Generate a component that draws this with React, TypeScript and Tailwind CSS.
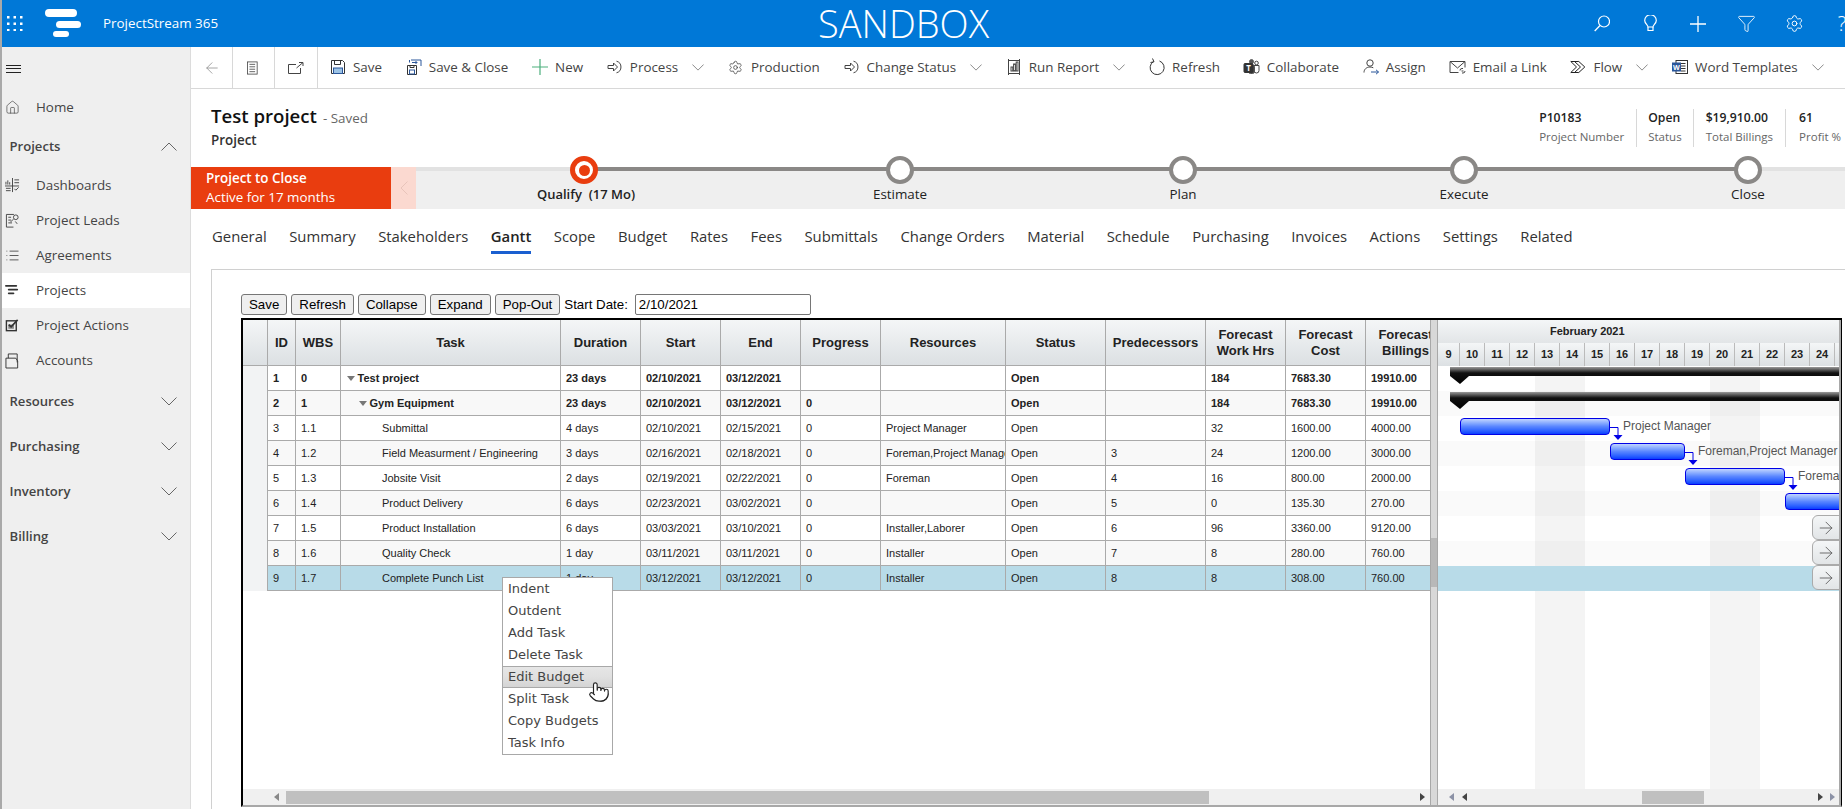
import React from 'react';
import { ArrowLeft, Filter, House, List, Pointer, Settings } from 'lucide-react';

const Svg = ({ w = 16, h = 16, vb = '0 0 16 16', children, className = '' }: { w?: number; h?: number; vb?: string; children: React.ReactNode; className?: string }) => (
  <svg width={w} height={h} viewBox={vb} fill="none" stroke="currentColor" strokeWidth={1} className={`shrink-0 ${className}`}>
    {children}
  </svg>
);

const ChevDown = ({ w = 12, h = 7, up = false }: { w?: number; h?: number; up?: boolean }) => (
  <Svg w={w} h={h} vb="0 0 16 9" className="text-[#666]">
    <path d={up ? 'M0.5 8.5 8 1l7.5 7.5' : 'M0.5 0.5 8 8l7.5-7.5'} />
  </Svg>
);

const ProcessIcon = () => (
  <Svg>
    <path d="M1 6.5h5.5V4l4 4-4 4V9.5H1z" />
    <path d="M9.5 2.2a6 6 0 0 1 0 11.6" />
  </Svg>
);

const icons: Record<string, React.ReactNode> = {
  save: (
    <Svg>
      <path d="M1.5 1.5h11l2 2v11h-13z" stroke="#333" />
      <path d="M4.5 1.5v4h6v-4" stroke="#333" />
      <rect x="3.5" y="9" width="9" height="5.5" fill="#9cc3e5" stroke="#2b579a" />
    </Svg>
  ),
  saveClose: (
    <Svg>
      <path d="M1.5 6.5h9v9h-9z" stroke="#333" />
      <rect x="3.5" y="11" width="5" height="4" stroke="#2b579a" />
      <path d="M4 6.5v2h4v-2" stroke="#333" />
      <path d="M5 1h10v6M3.5 1v2.5M6 3.5h5M9.5 2l1.5 1.5L9.5 5" stroke="#2b579a" />
    </Svg>
  ),
  new: (
    <Svg>
      <path d="M8 0v16M0 8h16" stroke="#4caf7d" strokeWidth={1.2} />
    </Svg>
  ),
  process: <ProcessIcon />,
  production: <Settings size={15} strokeWidth={1.25} />,
  status: <ProcessIcon />,
  report: (
    <Svg>
      <path d="M2 1.5h12M2 14.5h12M2.5 0v16M13.5 0v16" />
      <rect x="5" y="8" width="1.8" height="4" />
      <rect x="7.6" y="5" width="1.8" height="7" />
      <rect x="10.2" y="3" width="1.8" height="9" />
    </Svg>
  ),
  refresh: (
    <Svg h={18} vb="0 0 16 18" className="text-[#333]">
      <path d="M10.500 3a7 7 0 1 1-6 .6" />
      <path d="M3.500 0.500 5 3.800 1.500 4.500" />
    </Svg>
  ),
  collaborate: (
    <Svg w={17}>
      <circle cx="13" cy="4" r="1.8" />
      <circle cx="8" cy="2.6" r="2" fill="#555" stroke="#555" />
      <path d="M10 6.5h5.5v5a2.5 2.5 0 0 1-5 0" />
      <rect x="5" y="6" width="6" height="8.5" rx="2" fill="#555" stroke="#555" />
      <rect x="0.5" y="4.5" width="9" height="9" rx="1" fill="#333" stroke="#333" />
      <text x="5" y="12" fontSize="8" fontWeight="700" fill="#fff" stroke="none" textAnchor="middle">T</text>
    </Svg>
  ),
  assign: (
    <Svg>
      <circle cx="7" cy="4" r="3.2" stroke="#444" />
      <path d="M1 13.5c0-3.2 2.5-5.5 6-5.5 1.3 0 2.4.3 3.3.8" stroke="#444" />
      <path d="M8 13h7.5M13 10.8l2.5 2.2-2.5 2.2" stroke="#2b579a" />
    </Svg>
  ),
  email: (
    <Svg w={17}>
      <path d="M9 13.5H.5v-11h15v6" stroke="#444" />
      <path d="M.5 2.5 8 9l7.5-6.5" stroke="#444" />
      <path d="M10.5 11.5a2 2 0 0 1 2-2h1M15.5 12a2 2 0 0 1-2 2h-1M12 12h2" stroke="#444" />
    </Svg>
  ),
  flow: (
    <Svg>
      <path d="M.8 2.5h8l6 5.5-6 5.5h-8L6.5 8z" stroke="#222" />
      <path d="M4.5 2.5 10.5 8l-6 5.5" stroke="#222" />
    </Svg>
  ),
  word: (
    <Svg>
      <rect x="4" y="1.5" width="11.5" height="13" stroke="#333" />
      <path d="M9 4.5h4.5M9 7h4.5M9 9.5h4.5M9 12h4.5" stroke="#333" />
      <rect x="0.5" y="4" width="8" height="8" fill="#2b579a" stroke="#2b579a" />
      <text x="4.5" y="10.8" fontSize="7" fontWeight="700" fill="#fff" stroke="none" textAnchor="middle">W</text>
    </Svg>
  ),
};

const commands: { key: string; label: string; chev?: boolean }[] = [
  { key: 'save', label: 'Save' },
  { key: 'saveClose', label: 'Save & Close' },
  { key: 'new', label: 'New' },
  { key: 'process', label: 'Process', chev: true },
  { key: 'production', label: 'Production' },
  { key: 'status', label: 'Change Status', chev: true },
  { key: 'report', label: 'Run Report', chev: true },
  { key: 'refresh', label: 'Refresh' },
  { key: 'collaborate', label: 'Collaborate' },
  { key: 'assign', label: 'Assign' },
  { key: 'email', label: 'Email a Link' },
  { key: 'flow', label: 'Flow', chev: true },
  { key: 'word', label: 'Word Templates', chev: true },
];

const navIcons: Record<string, React.ReactNode> = {
  Home: <House size={15} strokeWidth={1.1} />,
  Dashboards: (
    <Svg w={15} h={15} className="text-[#444]">
      <path d="M1 4v3M3 2.5V7M5 4.500V7M8 0v15M0 8.500h15M10 2h5M10 5h5M1 11h5M1 13.500h5M10 11.500l1.500 1.500 3-3" />
    </Svg>
  ),
  'Project Leads': (
    <Svg w={15} h={16} className="text-[#444]">
      <path d="M9 14.500H1.500V1h8M3.500 4h3M3.500 7h3M3.500 10h4" />
      <circle cx="11.500" cy="4" r="2.500" />
      <path d="M6 9l3-3M11 8.500 13 11" />
    </Svg>
  ),
  Agreements: <List size={15} strokeWidth={1.25} className="text-[#333]" />,
  Projects: (
    <Svg w={15} h={15}>
      <path d="M1 3h11M4 7h9M4 11h5" stroke="#333" strokeWidth={2} strokeLinecap="round" />
    </Svg>
  ),
  'Project Actions': (
    <Svg w={15} h={15} className="text-[#333]">
      <rect x="1.500" y="3" width="10.500" height="10.500" strokeWidth={1.5} />
      <rect x="3.500" y="7" width="6" height="4.500" fill="#888" stroke="none" />
      <path d="M4 7l2.500 2.500L13.500 2" strokeWidth={1.8} />
    </Svg>
  ),
  Accounts: (
    <Svg w={15} h={17} className="text-[#333]">
      <path d="M1 5.500h10.500l2 3v7.500H1zM3.500 5.500v-4.500h9.500v9" />
    </Svg>
  ),
};

const tabs = ['General', 'Summary', 'Stakeholders', 'Gantt', 'Scope', 'Budget', 'Rates', 'Fees', 'Submittals', 'Change Orders', 'Material', 'Schedule', 'Purchasing', 'Invoices', 'Actions', 'Settings', 'Related'];

const stages = [
  { label: 'Qualify  (17 Mo)', width: 'w-[336px]', active: true },
  { label: 'Estimate', width: 'w-[296px]' },
  { label: 'Plan', width: 'w-[270px]' },
  { label: 'Execute', width: 'w-[292px]' },
  { label: 'Close', width: 'w-[276px]' },
];

const stats = [
  { value: 'P10183', label: 'Project Number', cls: 'pr-[12px]' },
  { value: 'Open', label: 'Status', cls: 'border-l px-[11px]' },
  { value: '$19,910.00', label: 'Total Billings', cls: 'border-l px-[12px]' },
  { value: '61', label: 'Profit %', cls: 'border-l pl-[13px]' },
];

const columns = [
  { title: 'ID', cls: 'w-[28px]' },
  { title: 'WBS', cls: 'w-[45px]' },
  { title: 'Task', cls: 'w-[220px]' },
  { title: 'Duration', cls: 'w-[80px]' },
  { title: 'Start', cls: 'w-[80px]' },
  { title: 'End', cls: 'w-[80px]' },
  { title: 'Progress', cls: 'w-[80px]' },
  { title: 'Resources', cls: 'w-[125px]' },
  { title: 'Status', cls: 'w-[100px]' },
  { title: 'Predecessors', cls: 'w-[100px]' },
  { title: 'Forecast Work Hrs', cls: 'w-[80px]' },
  { title: 'Forecast Cost', cls: 'w-[80px]' },
  { title: 'Forecast Billings', cls: 'w-[80px]' },
];

const rows = [
  { level: 0, bold: true, cells: ['1', '0', 'Test project', '23 days', '02/10/2021', '03/12/2021', '', '', 'Open', '', '184', '7683.30', '19910.00'] },
  { level: 1, bold: true, cells: ['2', '1', 'Gym Equipment', '23 days', '02/10/2021', '03/12/2021', '0', '', 'Open', '', '184', '7683.30', '19910.00'] },
  { level: 2, cells: ['3', '1.1', 'Submittal', '4 days', '02/10/2021', '02/15/2021', '0', 'Project Manager', 'Open', '', '32', '1600.00', '4000.00'] },
  { level: 2, cells: ['4', '1.2', 'Field Measurment / Engineering', '3 days', '02/16/2021', '02/18/2021', '0', 'Foreman,Project Manager', 'Open', '3', '24', '1200.00', '3000.00'] },
  { level: 2, cells: ['5', '1.3', 'Jobsite Visit', '2 days', '02/19/2021', '02/22/2021', '0', 'Foreman', 'Open', '4', '16', '800.00', '2000.00'] },
  { level: 2, cells: ['6', '1.4', 'Product Delivery', '6 days', '02/23/2021', '03/02/2021', '0', '', 'Open', '5', '0', '135.30', '270.00'] },
  { level: 2, cells: ['7', '1.5', 'Product Installation', '6 days', '03/03/2021', '03/10/2021', '0', 'Installer,Laborer', 'Open', '6', '96', '3360.00', '9120.00'] },
  { level: 2, cells: ['8', '1.6', 'Quality Check', '1 day', '03/11/2021', '03/11/2021', '0', 'Installer', 'Open', '7', '8', '280.00', '760.00'] },
  { level: 2, selected: true, cells: ['9', '1.7', 'Complete Punch List', '1 day', '03/12/2021', '03/12/2021', '0', 'Installer', 'Open', '8', '8', '308.00', '760.00'] },
];

const days = [9, 10, 11, 12, 13, 14, 15, 16, 17, 18, 19, 20, 21, 22, 23, 24, 25];

const menuItems = ['Indent', 'Outdent', 'Add Task', 'Delete Task', 'Edit Budget', 'Split Task', 'Copy Budgets', 'Task Info'];

const bars = [
  { row: 2, cls: 'left-[22px] w-[150px]', label: 'Project Manager', labelCls: 'left-[185px]' },
  { row: 3, cls: 'left-[172px] w-[75px]', label: 'Foreman,Project Manager', labelCls: 'left-[260px]' },
  { row: 4, cls: 'left-[247px] w-[100px]', label: 'Foreman', labelCls: 'left-[360px]' },
  { row: 5, cls: 'left-[347px] w-[70px]', label: '', labelCls: '' },
];

const Triangle = ({ dir, color }: { dir: 'l' | 'r'; color: string }) => (
  <svg width="5" height="8" viewBox="0 0 5 8" fill={color} className="shrink-0">
    <path d={dir === 'l' ? 'M5 0v8L0 4z' : 'M0 0v8l5-4z'} />
  </svg>
);

const SummaryBar = ({ id }: { id: string }) => (
  <svg width="401" height="21" className="absolute left-0 top-0">
    <defs>
      <linearGradient id={id} x1="0" y1="0" x2="0" y2="1">
        <stop offset="0" stopColor="#9a9a9a" />
        <stop offset="0.35" stopColor="#111" />
        <stop offset="1" stopColor="#000" />
      </linearGradient>
    </defs>
    <path d="M12 2H401V11H31L22 19L12 11Z" fill={`url(#${id})`} />
  </svg>
);

export default function App() {
  return (
    <div className="flex h-[809px] w-[1845px] overflow-hidden bg-white font-['Open_Sans',sans-serif] text-[13.4px] text-[#333]">
      <div className="w-[2px] shrink-0 bg-[#a9a9a9]" />
      <div className="flex min-w-0 flex-1 flex-col">
        {/* top bar */}
        <header className="flex h-[47px] shrink-0 items-center bg-[#0078d7] pl-[5px] text-white">
          <svg width="16" height="15" viewBox="0 0 16 15" fill="#fff" className="shrink-0">
            {[0, 6.5, 13].map((y) => [0, 6.5, 13].map((x) => <rect key={`${x}-${y}`} x={x} y={y} width="2.500" height="2.500" />))}
          </svg>
          <svg width="36" height="29" viewBox="0 0 36 29" fill="#fff" className="ml-[22px] shrink-0">
            <rect x="0" y="0" width="32" height="8" rx="4" />
            <rect x="11" y="12" width="25" height="7" rx="3.500" />
            <rect x="8" y="22" width="16" height="6" rx="3" />
          </svg>
          <div className="ml-[6px] h-[20px] w-px bg-white/40" />
          <span className="ml-[16px] w-[113px] whitespace-nowrap">ProjectStream 365</span>
          <span className="ml-[602px] whitespace-nowrap text-[38px] leading-[47px] font-light">SANDBOX</span>
          <div className="ml-[589px] flex shrink-0 items-center">
            <div className="flex w-[48px] justify-center">
              <Svg h={17} vb="0 0 16 17">
                <circle cx="10" cy="6.500" r="5.500" strokeWidth={1.2} />
                <path d="M6 10.500 .7 16" strokeWidth={1.3} />
              </Svg>
            </div>
            <div className="flex w-[48px] justify-center">
              <Svg w={13} h={17} vb="0 0 13 17">
                <path d="M4 12c0-2-3.300-3.500-3.300-6.500a5.800 5.800 0 0 1 11.600 0C12.300 8.500 9 10 9 12z" strokeWidth={1.2} />
                <path d="M4 12v3.500h5V12" strokeWidth={1.2} />
              </Svg>
            </div>
            <div className="flex w-[48px] justify-center">
              <Svg>
                <path d="M8 0v16M0 8h16" strokeWidth={1.3} />
              </Svg>
            </div>
            <div className="flex w-[48px] justify-center"><Filter size={19} strokeWidth={1.1} /></div>
            <div className="flex w-[48px] justify-center"><Settings size={19} strokeWidth={1.2} /></div>
            <div className="flex w-[48px] justify-center text-[20px] font-light">?</div>
          </div>
        </header>

        <div className="flex min-h-0 flex-1">
          {/* sidebar */}
          <aside className="flex w-[189px] shrink-0 flex-col border-r border-[#dcdcdc] bg-[#efefef]">
            <div className="flex h-[43px] shrink-0 items-center pl-[4px]">
              <div className="flex w-[15px] flex-col gap-[2.5px]">
                <div className="h-px bg-[#222]" />
                <div className="h-px bg-[#222]" />
                <div className="h-px bg-[#222]" />
              </div>
            </div>
            <NavItem label="Home" />
            <NavGroup label="Projects" open className="h-[43px]" />
            <NavItem label="Dashboards" />
            <NavItem label="Project Leads" />
            <NavItem label="Agreements" />
            <NavItem label="Projects" selected />
            <NavItem label="Project Actions" />
            <NavItem label="Accounts" />
            <div className="h-[1px] shrink-0" />
            <NavGroup label="Resources" className="h-[45px]" />
            <NavGroup label="Purchasing" className="h-[45px]" />
            <NavGroup label="Inventory" className="h-[45px]" />
            <NavGroup label="Billing" className="h-[45px]" />
          </aside>

          {/* content */}
          <main className="flex min-w-0 flex-1 flex-col">
            <div className="flex h-[42px] shrink-0 items-center border-b border-[#d8d8d8] text-[#444]">
              <div className="flex h-full w-[42px] items-center justify-center border-r border-[#d8d8d8] text-[#888]">
                <ArrowLeft size={18} strokeWidth={1} />
              </div>
              <div className="flex h-full w-[42px] items-center justify-center border-r border-[#d8d8d8]">
                <Svg w={13} h={16}>
                  <rect x="0.5" y="0.5" width="12" height="15" />
                  <path d="M3 3.500h7M3 6.500h7M3 9.500h7M3 12.500h7" />
                </Svg>
              </div>
              <div className="flex h-full w-[43px] items-center justify-center border-r border-[#d8d8d8]">
                <Svg h={12} vb="0 0 16 12">
                  <path d="M12.500 6v5.500H.5v-9H8" />
                  <path d="M8.500 6 15 .5M11 .5h4V4" />
                </Svg>
              </div>
              <div className="ml-[12px] flex items-center gap-[23.8px]">
                {commands.map((c) => (
                  <div key={c.key} className="flex shrink-0 items-center whitespace-nowrap">
                    <span className="flex w-[16px] justify-center">{icons[c.key]}</span>
                    <span className="ml-[7px]">{c.label}</span>
                    {c.chev && (
                      <span className="ml-[14px]">
                        <ChevDown />
                      </span>
                    )}
                  </div>
                ))}
              </div>
            </div>

            {/* record header */}
            <div className="flex h-[78px] shrink-0 justify-between pl-[20px] pr-[4px] pt-[14px]">
              <div>
                <div className="flex items-baseline whitespace-nowrap">
                  <span className="text-[18.6px] leading-[26px] font-semibold text-[#111]">Test project</span>
                  <span className="ml-[6px] text-[#666]">- Saved</span>
                </div>
                <div className="mt-[1px] leading-[20px] font-semibold text-[#333]">Project</div>
              </div>
              <div className="mt-[6px] flex h-[38px]">
                {stats.map((s) => (
                  <div key={s.label} className={`whitespace-nowrap border-[#d8d8d8] ${s.cls}`}>
                    <div className="text-[12.2px] leading-[18px] font-semibold text-[#222]">{s.value}</div>
                    <div className="text-[11.5px] leading-[20px] text-[#666]">{s.label}</div>
                  </div>
                ))}
              </div>
            </div>

            {/* process bar */}
            <div className="flex h-[42px] shrink-0">
              <div className="flex w-[200px] shrink-0 flex-col justify-center bg-[#e93d0f] pl-[15px] leading-[19px] text-white">
                <span className="font-semibold">Project to Close</span>
                <span>Active for 17 months</span>
              </div>
              <div className="flex w-[25px] shrink-0 items-center justify-center bg-[#fbd9d0] text-[#e8c4ba]">
                <svg width="8" height="14" viewBox="0 0 8 14" fill="none" stroke="currentColor"><path d="M7.500.5 1 7l6.500 6.500" /></svg>
              </div>
              <div className="relative flex flex-1 bg-[#efefef]">
                <div className="absolute inset-x-0 top-0 h-[4px] bg-[#e2e2e2]" />
                <div className="absolute left-[168px] top-0 h-[4px] w-[1164px] bg-[#8a8886]" />
                {stages.map((s) => (
                  <div key={s.label} className={`relative -mt-[11px] flex shrink-0 flex-col items-center ${s.width}`}>
                    {s.active ? (
                      <div className="flex h-[28px] w-[28px] items-center justify-center rounded-full border-[5px] border-[#e93d0f] bg-white">
                        <div className="h-[11px] w-[11px] rounded-full bg-[#e93d0f]" />
                      </div>
                    ) : (
                      <div className="h-[28px] w-[28px] rounded-full border-[4px] border-[#8a8886] bg-white" />
                    )}
                    <span className={`whitespace-pre leading-[20px] text-[#222] ${s.active ? 'ml-[4px] text-[13px] font-semibold' : ''}`}>{s.label}</span>
                  </div>
                ))}
              </div>
            </div>

            {/* tabs */}
            <div className="flex h-[60px] shrink-0 gap-[22.500px] pl-[21px] pt-[17px] text-[14.85px] text-[#333]">
              {tabs.map((t) => (
                <div key={t} className={`h-[28px] whitespace-nowrap border-b-[3px] leading-[20px] ${t === 'Gantt' ? 'border-[#1a5fd0] font-semibold text-[#222]' : 'border-transparent'}`}>
                  {t}
                </div>
              ))}
            </div>

            {/* gantt panel */}
            <div className="ml-[20px] flex-1 border-l border-t border-[#d0d0d0] pl-[29px] pt-[24px] font-['Liberation_Sans',Arial,sans-serif] text-black">
              <div className="flex h-[21px] items-center gap-[4px] text-[13.300px]">
                {['Save', 'Refresh', 'Collapse', 'Expand', 'Pop-Out'].map((b) => (
                  <button key={b} className="h-[21px] rounded-[3px] border border-[#767676] bg-[#efefef] px-[7px] leading-none">
                    {b}
                  </button>
                ))}
                <span className="mr-[3px]">Start Date:</span>
                <input readOnly value="2/10/2021" className="h-[21px] w-[176px] rounded-[2px] border border-[#767676] px-[3px] outline-none" />
              </div>

              <div className="relative mt-[3px] flex h-[489px] w-[1601px] border-x border-t-2 border-b-2 border-black border-b-[#a8a8a8] border-l-2">
                {/* table side */}
                <div className="flex w-[1187px] shrink-0 flex-col overflow-hidden bg-white">
                  <div className="flex h-[46px] shrink-0 border-b border-[#aaa] bg-gradient-to-b from-[#f4f6f7] to-[#dce0e3] text-[13px] leading-[16px] font-bold text-[#222]">
                    <div className="w-[25px] shrink-0 border-r border-[#aaa]" />
                    {columns.map((c) => (
                      <div key={c.title} className={`flex shrink-0 items-center justify-center border-r border-[#aaa] text-center ${c.cls}`}>
                        {c.title}
                      </div>
                    ))}
                  </div>
                  {rows.map((r, i) => (
                    <div key={r.cells[0]} className={`flex h-[25px] shrink-0 text-[11px] text-[#222] ${r.selected ? 'bg-[#b8dbe8]' : i % 2 ? 'bg-[#f8f8f8]' : 'bg-white'} ${r.bold ? 'font-bold' : ''}`}>
                      <div className="w-[25px] shrink-0 border-r border-[#aaa] bg-[#f2f3f4]" />
                      {r.cells.map((cell, j) => (
                        <div key={j} className={`flex shrink-0 items-center overflow-hidden whitespace-nowrap border-b border-r border-[#aaa] px-[5px] ${columns[j].cls}`}>
                          {j === 2 ? (
                            <span className={`flex items-center ${r.level === 0 ? 'pl-px' : r.level === 1 ? 'pl-[13px]' : 'pl-[36px]'}`}>
                              {r.level < 2 && <span className="mr-[2.500px] h-0 w-0 border-x-[4.500px] border-t-[5px] border-x-transparent border-t-[#777]" />}
                              {cell}
                            </span>
                          ) : (
                            cell
                          )}
                        </div>
                      ))}
                    </div>
                  ))}
                  <div className="flex-1" />
                  <div className="flex h-[16px] shrink-0 items-center bg-[#f0f0f0]">
                    <div className="w-[35px] shrink-0 pl-[31px]"><Triangle dir="l" color="#888" /></div>
                    <div className="ml-[8px] h-[13px] w-[923px] bg-[#c0c0c0]" />
                    <div className="ml-[211px]"><Triangle dir="r" color="#444" /></div>
                  </div>
                </div>

                {/* splitter */}
                <div className="flex w-[8px] shrink-0 flex-col border-x border-[#a8a8a8] bg-[#d8d8d8]">
                  <div className="mt-[218px] h-[49px] bg-[#b8b8b8]" />
                </div>

                {/* chart side */}
                <div className="flex w-[401px] shrink-0 flex-col overflow-hidden bg-white">
                  <div className="flex h-[23px] shrink-0 items-center bg-gradient-to-b from-[#f4f6f7] to-[#e2e5e7] pl-[112px] text-[11px] font-bold text-[#222]">
                    February 2021
                  </div>
                  <div className="flex h-[23px] shrink-0 bg-gradient-to-b from-[#f4f6f7] to-[#dce0e3] text-[11px] font-bold text-[#222]">
                    {days.map((d) => (
                      <div key={d} className={`flex shrink-0 items-center justify-center border-r border-[#bbb] ${d === 9 ? 'w-[22px]' : 'w-[25px]'}`}>
                        {d}
                      </div>
                    ))}
                  </div>
                  <div className="relative flex-1">
                    <div className="absolute inset-y-0 left-[97px] w-[50px] bg-[#f4f4f4]" />
                    <div className="absolute inset-y-0 left-[272px] w-[50px] bg-[#f4f4f4]" />
                    {rows.map((r, i) => (
                      <div key={r.cells[0]} className={`relative h-[25px] ${r.selected ? 'bg-[#b8dbe8]' : i % 2 ? 'bg-black/[0.02]' : ''}`}>
                        {i >= 6 && (
                          <div className="absolute -top-px left-[374px] flex h-[25px] w-[30px] items-center rounded-l-[6px] border border-[#aaa] bg-gradient-to-b from-[#f4f6f7] to-[#e2e5e7] pl-[3px] text-[#555]">
                            <ArrowLeft size={20} strokeWidth={1} className="-scale-x-100" />
                          </div>
                        )}
                      </div>
                    ))}
                    <div className="absolute left-0 -top-px"><SummaryBar id="sum-a" /></div>
                    <div className="absolute left-0 top-[24px]"><SummaryBar id="sum-b" /></div>
                    {bars.map((b) => (
                      <React.Fragment key={b.row}>
                        <div style={{ top: b.row * 25 + 2 }} className={`absolute h-[17px] rounded-[4px] border border-[#0000e6] bg-gradient-to-b from-[#c2d4ff] via-[#5a86ff] to-[#0a3cff] ${b.cls}`} />
                        {b.label && (
                          <span style={{ top: b.row * 25 + 2 }} className={`absolute whitespace-nowrap text-[12px] leading-[17px] text-[#555] ${b.labelCls}`}>
                            {b.label}
                          </span>
                        )}
                      </React.Fragment>
                    ))}
                    <svg width="401" height="130" className="absolute left-0 -top-px" fill="none" stroke="#0000e6">
                      <path d="M172 62.500h8V70" />
                      <path d="M175.500 70h9l-4.500 5z" fill="#0000e6" stroke="none" />
                      <path d="M247 87.500h8V95" />
                      <path d="M250.500 95h9l-4.500 5z" fill="#0000e6" stroke="none" />
                      <path d="M347 112.500h8V120" />
                      <path d="M350.500 120h9l-4.500 5z" fill="#0000e6" stroke="none" />
                    </svg>
                    <div className="absolute inset-x-0 bottom-0 flex h-[16px] items-center bg-[#f0f0f0]">
                      <div className="ml-[11px]"><Triangle dir="l" color="#8c92a6" /></div>
                      <div className="ml-[8px]"><Triangle dir="l" color="#444" /></div>
                      <div className="ml-[175px] h-[13px] w-[62px] bg-[#c0c0c0]" />
                      <div className="ml-[114px]"><Triangle dir="r" color="#444" /></div>
                      <div className="ml-[7px]"><Triangle dir="r" color="#8c92a6" /></div>
                    </div>
                  </div>
                </div>
                <div className="w-[2px] shrink-0 bg-[#a8a8a8]" />

                {/* context menu */}
                <div className="absolute left-[259px] top-[257px] z-10 w-[111px] border border-[#a8a8a8] bg-white font-['DejaVu_Sans',sans-serif] text-[13px] text-[#444]">
                  {menuItems.map((m) => (
                    <div
                      key={m}
                      className={`flex h-[22px] items-center whitespace-nowrap pl-[5px] ${m === 'Edit Budget' ? 'border-y border-[#a8a8a8] bg-gradient-to-b from-[#e6e6e6] via-[#e0e0e0] to-[#d4d4d4]' : ''}`}
                    >
                      {m}
                    </div>
                  ))}
                  <Pointer size={22} strokeWidth={1.25} fill="#fff" className="absolute left-[85px] top-[103px] text-[#222]" />
                </div>
              </div>
            </div>
          </main>
        </div>
      </div>
    </div>
  );
}

function NavItem({ label, selected = false }: { label: string; selected?: boolean }) {
  return (
    <div className={`flex h-[35px] shrink-0 items-center text-[#444] ${selected ? 'bg-white' : ''}`}>
      <span className="flex w-[34px] shrink-0 justify-center pr-[14px] text-[#444]">{navIcons[label]}</span>
      {label}
    </div>
  );
}

function NavGroup({ label, open = false, className = '' }: { label: string; open?: boolean; className?: string }) {
  return (
    <div className={`flex shrink-0 items-center justify-between pl-[7.500px] pr-[13px] text-[13.1px] font-semibold text-[#444] ${className}`}>
      {label}
      <ChevDown w={16} h={9} up={open} />
    </div>
  );
}
